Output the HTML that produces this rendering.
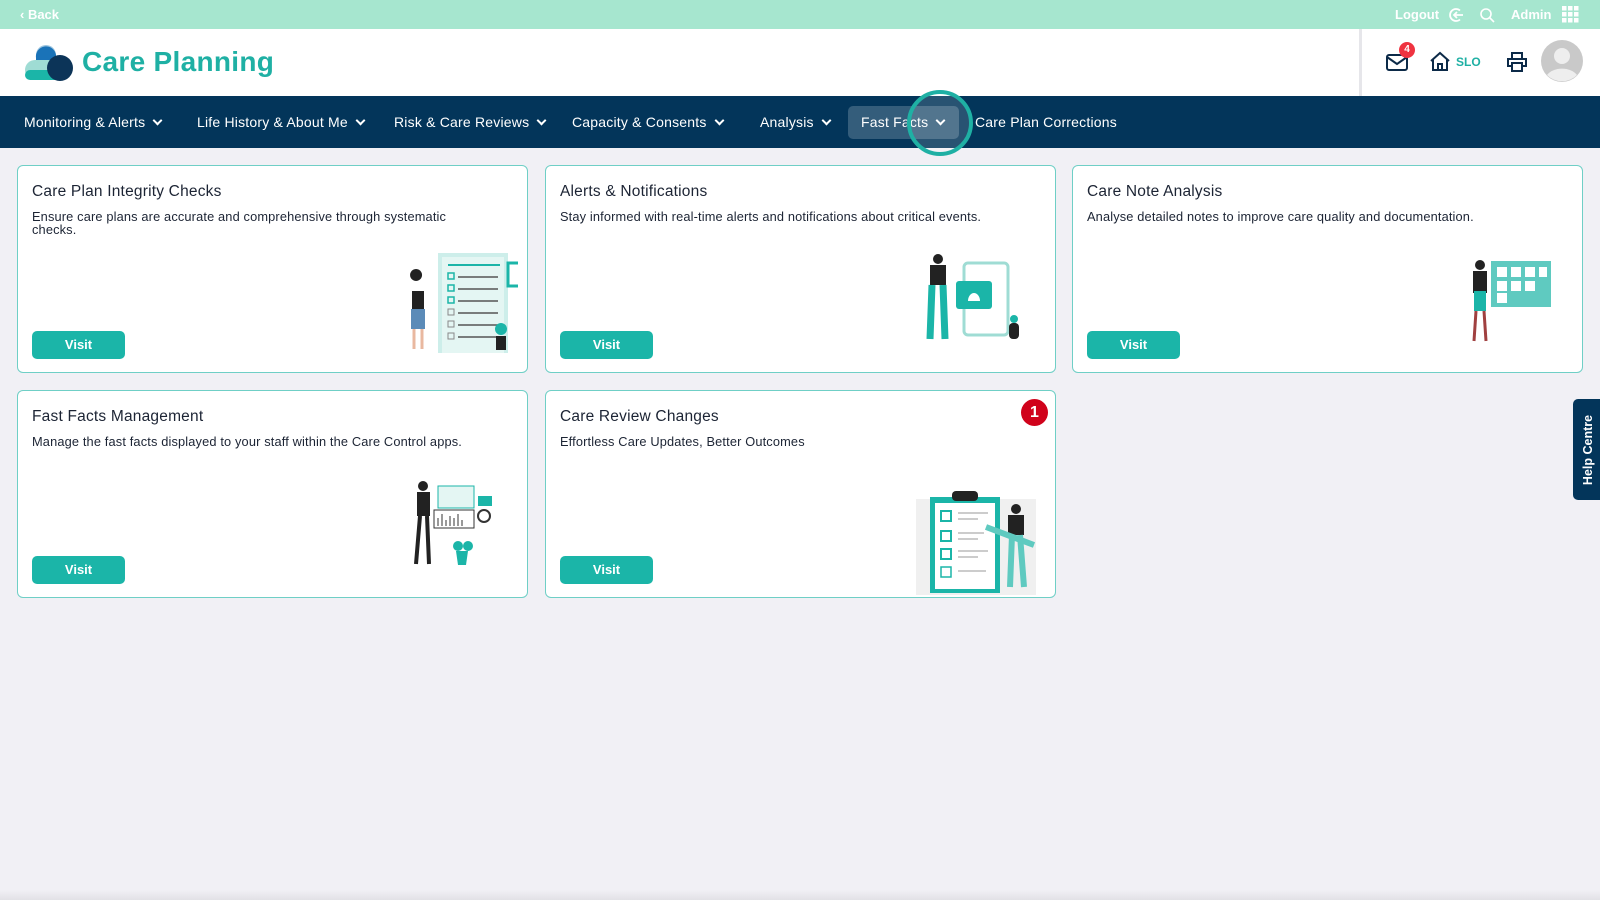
<!DOCTYPE html>
<html><head><meta charset="utf-8"><style>
*{box-sizing:border-box;margin:0;padding:0}
body{width:1600px;height:900px;overflow:hidden;background:#f1f0f5;font-family:"Liberation Sans",sans-serif;position:relative;color:#1c2434}
.top{position:absolute;left:0;top:0;width:1600px;height:29px;background:#a6e6cf;color:#fff;font-size:13px;font-weight:bold}
.top span{position:absolute;top:7px}
.hdr{position:absolute;left:0;top:29px;width:1600px;height:67px;background:#fff}
.nav{position:absolute;left:0;top:96px;width:1600px;height:52px;background:#03355a;color:#fff;font-size:14px;letter-spacing:.2px}
.nav span{position:absolute;top:18px;white-space:nowrap}
.chev{display:inline-block;width:7px;height:7px;border-right:2px solid #fff;border-bottom:2px solid #fff;transform:rotate(45deg);margin-left:9px;position:relative;top:-3px}
.card{position:absolute;width:511px;height:208px;background:#fff;border:1.5px solid #6fcfc6;border-radius:6px}
.card h3{position:absolute;left:14px;top:17px;font-size:15.5px;font-weight:normal;color:#1c2434;letter-spacing:.2px}
.card p{position:absolute;left:14px;top:44px;width:480px;font-size:12.8px;line-height:13px;color:#1c2434;letter-spacing:.15px}
.btn{position:absolute;left:14px;top:165px;width:93px;height:28px;background:#1bb5a8;border-radius:5px;color:#fff;font-weight:bold;font-size:13px;text-align:center;line-height:28px}
.ill{position:absolute}
</style></head><body>
<div class="top"><span style="left:20px">‹ Back</span><span style="left:1395px">Logout</span>
<svg style="position:absolute;left:1448px;top:7px" width="16" height="16" viewBox="0 0 16 16" fill="none" stroke="#fff" stroke-width="1.8"><path d="M12 3.5A6 6 0 1 0 12 12.5"/><path d="M15 8H6M9 5L6 8l3 3"/></svg>
<svg style="position:absolute;left:1479px;top:7px" width="16" height="16" viewBox="0 0 16 16" fill="none" stroke="#fff" stroke-width="1.6"><circle cx="7" cy="7" r="5"/><path d="M11 11l4 4"/></svg>
<span style="left:1511px">Admin</span>
<svg style="position:absolute;left:1562px;top:6px" width="17" height="17" viewBox="0 0 17 17" fill="#fff"><rect x="0" y="0" width="4.5" height="4.5"/><rect x="6" y="0" width="4.5" height="4.5"/><rect x="12" y="0" width="4.5" height="4.5"/><rect x="0" y="6" width="4.5" height="4.5"/><rect x="6" y="6" width="4.5" height="4.5"/><rect x="12" y="6" width="4.5" height="4.5"/><rect x="0" y="12" width="4.5" height="4.5"/><rect x="6" y="12" width="4.5" height="4.5"/><rect x="12" y="12" width="4.5" height="4.5"/></svg>
</div>
<div class="hdr">
<svg style="position:absolute;left:24px;top:15px" width="50" height="38" viewBox="0 0 50 38"><circle cx="22" cy="11" r="10" fill="#9bc4df"/><path d="M12 14a10 10 0 0 1 20-3v8H12z" fill="#1a73b8"/><rect x="1" y="16" width="40" height="20" rx="10" fill="#9fdcd4"/><rect x="1" y="26" width="40" height="10" rx="5" fill="#1bb5a8"/><circle cx="36" cy="24" r="13" fill="#0c3458"/></svg>
<div style="position:absolute;left:82px;top:17px;font-size:28px;font-weight:bold;color:#1fb0a4;letter-spacing:.3px">Care Planning</div>
<div style="position:absolute;left:1359px;top:0;width:3px;height:67px;background:#e6e6ea"></div>
<svg style="position:absolute;left:1386px;top:24px" width="22" height="18" viewBox="0 0 22 18" fill="none" stroke="#0c2a48" stroke-width="2"><rect x="1" y="2" width="20" height="15" rx="2"/><path d="M1 4l10 7 10-7"/></svg>
<div style="position:absolute;left:1399px;top:13px;width:16px;height:16px;border-radius:50%;background:#ef3340;color:#fff;font-size:10px;font-weight:bold;text-align:center;line-height:16px">4</div>
<svg style="position:absolute;left:1429px;top:22px" width="22" height="20" viewBox="0 0 22 20" fill="none" stroke="#0c2a48" stroke-width="2"><path d="M2 10L11 2l9 8M4 8v11h14V8M9 19v-6h4v6"/></svg>
<div style="position:absolute;left:1456px;top:26px;font-size:12px;color:#1fb0a4;font-weight:bold">SLO</div>
<svg style="position:absolute;left:1506px;top:22px" width="22" height="21" viewBox="0 0 22 21" fill="none" stroke="#0c2a48" stroke-width="2"><path d="M6 7V2h10v5M6 15H2V8h18v7h-4"/><rect x="6" y="12" width="10" height="8"/></svg>
<svg style="position:absolute;left:1541px;top:11px" width="42" height="42" viewBox="0 0 42 42"><circle cx="21" cy="21" r="21" fill="#c9c9c9"/><circle cx="21" cy="16" r="8" fill="#eee"/><path d="M6 35a17 12 0 0 1 30 0a21 21 0 0 1-30 0z" fill="#eee"/></svg>
</div>
<div class="nav">
<span style="left:24px">Monitoring &amp; Alerts<i class="chev"></i></span>
<span style="left:197px">Life History &amp; About Me<i class="chev"></i></span>
<span style="left:394px">Risk &amp; Care Reviews<i class="chev"></i></span>
<span style="left:572px">Capacity &amp; Consents<i class="chev"></i></span>
<span style="left:760px">Analysis<i class="chev"></i></span>
<div style="position:absolute;left:848px;top:10px;width:111px;height:33px;background:#345d7b;border-radius:5px"></div>
<span style="left:861px">Fast Facts<i class="chev"></i></span>
<span style="left:975px">Care Plan Corrections</span>
</div>
<div style="position:absolute;left:907px;top:90px;width:66px;height:66px;border-radius:50%;border:4px solid #1fb0a4;background:rgba(255,255,255,.15)"></div>

<div class="card" style="left:17px;top:165px"><h3>Care Plan Integrity Checks</h3><p style="width:450px">Ensure care plans are accurate and comprehensive through systematic checks.</p><div class="btn">Visit</div>
<svg class="ill" style="left:380px;top:85px" width="120" height="110" viewBox="0 0 120 110"><rect x="40" y="2" width="70" height="100" fill="#cdeeea"/><rect x="44" y="6" width="62" height="96" fill="#e4f6f3"/><path d="M50 14h52" stroke="#1bb5a8" stroke-width="2"/><g stroke="#555" stroke-width="1.5"><path d="M60 26h40M60 38h40M60 50h40M60 62h40M60 74h40M60 86h40"/></g><g fill="none" stroke="#1bb5a8" stroke-width="1.5"><rect x="50" y="22" width="6" height="6"/><rect x="50" y="34" width="6" height="6"/><rect x="50" y="46" width="6" height="6"/></g><g fill="none" stroke="#888"><rect x="50" y="58" width="6" height="6"/><rect x="50" y="70" width="6" height="6"/><rect x="50" y="82" width="6" height="6"/></g><rect x="110" y="12" width="13" height="23" fill="none" stroke="#1bb5a8" stroke-width="3"/><path d="M18 30a6 6 0 1 1 0.1 0z" fill="#222"/><rect x="14" y="40" width="12" height="20" fill="#222"/><rect x="13" y="58" width="14" height="20" fill="#5b8bb8"/><path d="M16 78v20M24 78v20" stroke="#e9b8a0" stroke-width="3"/><rect x="98" y="85" width="10" height="14" fill="#222"/><circle cx="103" cy="78" r="6" fill="#1bb5a8"/></svg>
</div>
<div class="card" style="left:545px;top:165px"><h3>Alerts &amp; Notifications</h3><p>Stay informed with real-time alerts and notifications about critical events.</p><div class="btn">Visit</div>
<svg class="ill" style="left:370px;top:85px" width="120" height="110" viewBox="0 0 120 110"><rect x="48" y="12" width="44" height="72" rx="4" fill="#fff" stroke="#9fdcd4" stroke-width="3"/><rect x="40" y="30" width="36" height="28" rx="3" fill="#1bb5a8"/><path d="M52 50a6 8 0 0 1 12 0z" fill="#fff"/><circle cx="22" cy="8" r="5" fill="#222"/><rect x="14" y="14" width="16" height="20" fill="#222"/><path d="M16 34l-2 54M27 34l2 54" stroke="#1bb5a8" stroke-width="7"/><rect x="93" y="72" width="10" height="16" rx="4" fill="#222"/><circle cx="98" cy="68" r="4" fill="#1bb5a8"/></svg>
</div>
<div class="card" style="left:1072px;top:165px"><h3>Care Note Analysis</h3><p>Analyse detailed notes to improve care quality and documentation.</p><div class="btn">Visit</div>
<svg class="ill" style="left:380px;top:85px" width="120" height="110" viewBox="0 0 120 110"><rect x="38" y="10" width="60" height="46" fill="#5fcac0"/><g fill="#fff"><rect x="44" y="16" width="10" height="10"/><rect x="58" y="16" width="10" height="10"/><rect x="72" y="16" width="10" height="10"/><rect x="86" y="16" width="8" height="10"/><rect x="44" y="30" width="10" height="10"/><rect x="58" y="30" width="10" height="10"/><rect x="72" y="30" width="10" height="10"/><rect x="44" y="42" width="10" height="10"/></g><circle cx="27" cy="14" r="5" fill="#222"/><rect x="20" y="20" width="14" height="22" fill="#222"/><rect x="21" y="40" width="12" height="20" fill="#1bb5a8"/><path d="M23 60l-2 30M31 60l2 30" stroke="#a04040" stroke-width="3"/></svg>
</div>
<div class="card" style="left:17px;top:390px"><h3>Fast Facts Management</h3><p>Manage the fast facts displayed to your staff within the Care Control apps.</p><div class="btn">Visit</div>
<svg class="ill" style="left:380px;top:85px" width="120" height="110" viewBox="0 0 120 110"><rect x="40" y="10" width="36" height="22" fill="#e4f6f3" stroke="#1bb5a8"/><rect x="36" y="34" width="40" height="18" fill="#fff" stroke="#333"/><g stroke="#333"><path d="M40 50v-8M44 50v-12M48 50v-6M52 50v-10M56 50v-8M60 50v-12M64 50v-6"/></g><rect x="80" y="20" width="14" height="10" fill="#1bb5a8"/><circle cx="86" cy="40" r="6" fill="none" stroke="#333" stroke-width="2"/><circle cx="25" cy="10" r="5" fill="#222"/><rect x="19" y="16" width="13" height="24" fill="#222"/><path d="M22 40l-4 48M29 40l2 48" stroke="#222" stroke-width="4"/><path d="M58 75h12l-2 14h-8z" fill="#1bb5a8"/><circle cx="60" cy="70" r="5" fill="#1bb5a8"/><circle cx="70" cy="70" r="5" fill="#1bb5a8"/></svg>
</div>
<div class="card" style="left:545px;top:390px"><h3>Care Review Changes</h3><p>Effortless Care Updates, Better Outcomes</p><div class="btn">Visit</div>
<div style="position:absolute;left:475px;top:8px;width:27px;height:27px;border-radius:50%;background:#d0021b;color:#fff;font-size:16px;font-weight:bold;text-align:center;line-height:27px">1</div>
<svg class="ill" style="left:370px;top:92px" width="130" height="112" viewBox="0 0 130 112"><rect x="0" y="16" width="120" height="96" fill="#f0f0f0"/><rect x="14" y="14" width="70" height="96" fill="#1bb5a8"/><rect x="19" y="20" width="60" height="86" fill="#fff"/><rect x="36" y="8" width="26" height="10" rx="4" fill="#222"/><g fill="none" stroke="#1bb5a8" stroke-width="2"><rect x="25" y="28" width="10" height="10"/><rect x="25" y="48" width="10" height="10"/><rect x="25" y="66" width="10" height="10"/></g><rect x="25" y="84" width="10" height="10" fill="none" stroke="#1bb5a8" stroke-width="1.5"/><g stroke="#ccc" stroke-width="2"><path d="M42 30h30M42 36h20M42 50h26M42 56h20M42 68h30M42 74h20M42 88h28"/></g><circle cx="100" cy="26" r="5" fill="#222"/><rect x="92" y="32" width="16" height="20" fill="#222"/><path d="M96 52l-2 52M104 52l4 52" stroke="#5fcac0" stroke-width="6"/><path d="M70 44l48 18" stroke="#5fcac0" stroke-width="6"/></svg>
</div>
<div style="position:absolute;left:1573px;top:399px;width:30px;height:101px;background:#03355a;border-radius:5px 0 0 5px"></div>
<div style="position:absolute;left:1538px;top:440px;width:100px;height:20px;transform:rotate(-90deg);color:#fff;font-size:12.5px;font-weight:bold;text-align:center;line-height:20px">Help Centre</div>
<div style="position:absolute;left:0;top:890px;width:1600px;height:10px;background:linear-gradient(#f1f0f5,#e2e1e6)"></div>
</body></html>
